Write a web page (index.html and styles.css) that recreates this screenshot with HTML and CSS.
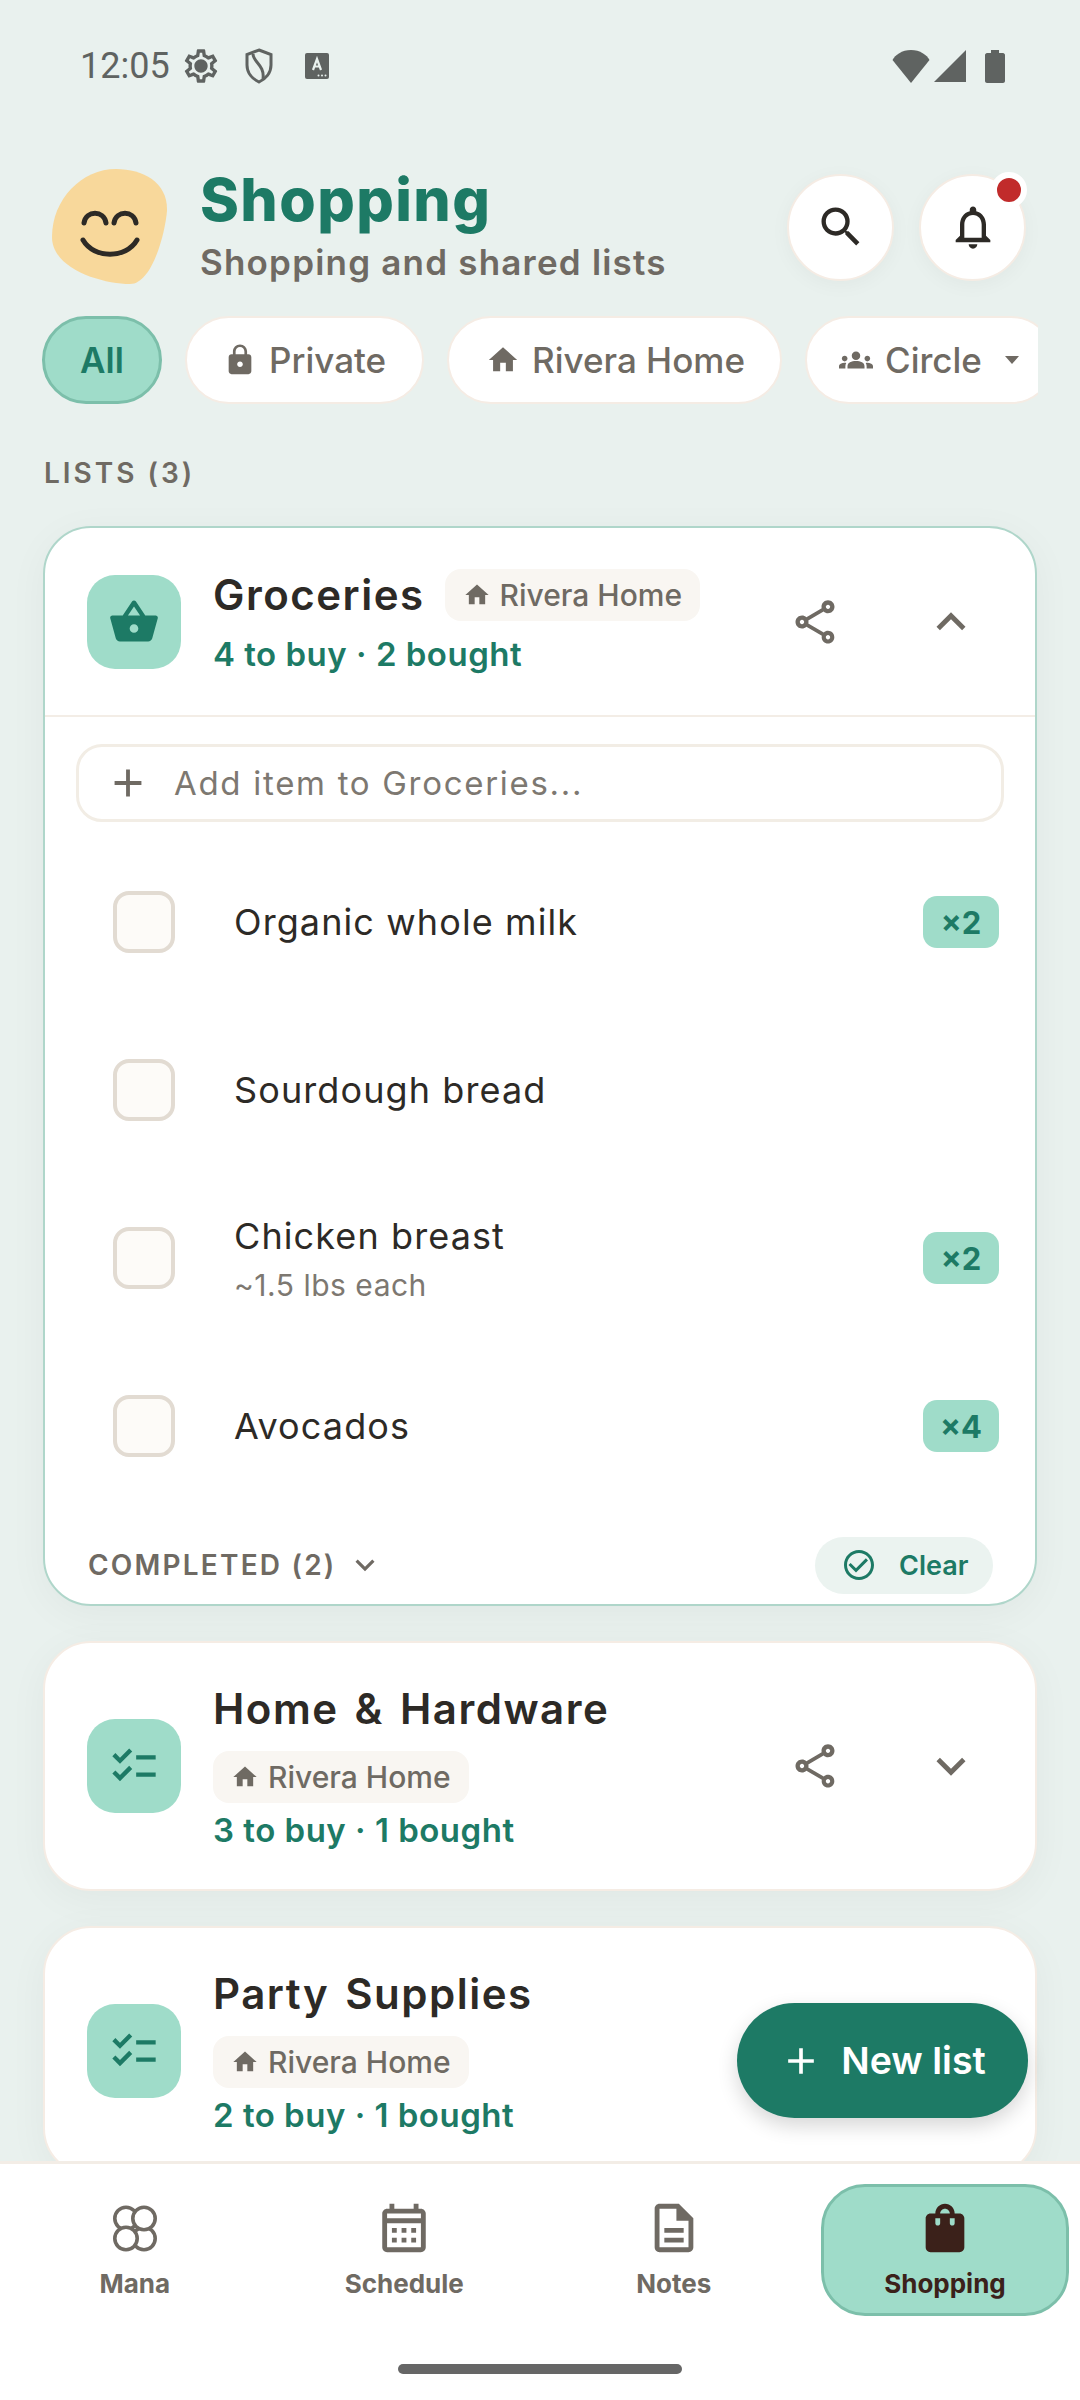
FILE: index.html
```html
<!DOCTYPE html>
<html lang="en">
<head>
    <meta charset="UTF-8">
    <meta name="viewport" content="width=device-width, initial-scale=1.0">
    <title>Shopping</title>
    <link rel="stylesheet" href="styles.css">
</head>
<body>
    <div class="screen">
        <div class="status-bar">
            <span class="clock">12:05</span>
            <svg class="st-gear" viewBox="0 0 24 24"><path d="M19.43 12.98c.04-.32.07-.64.07-.98 0-.34-.03-.66-.07-.98l2.11-1.65c.19-.15.24-.42.12-.64l-2-3.46c-.09-.16-.26-.25-.44-.25-.06 0-.12.01-.17.03l-2.49 1c-.52-.4-1.08-.73-1.69-.98l-.38-2.65C14.46 2.18 14.25 2 14 2h-4c-.25 0-.46.18-.49.42l-.38 2.65c-.61.25-1.17.59-1.69.98l-2.49-1c-.06-.02-.12-.03-.18-.03-.17 0-.34.09-.43.25l-2 3.46c-.13.22-.07.49.12.64l2.11 1.65c-.04.32-.07.65-.07.98 0 .33.03.66.07.98l-2.11 1.65c-.19.15-.24.42-.12.64l2 3.46c.09.16.26.25.44.25.06 0 .12-.01.17-.03l2.49-1c.52.4 1.08.73 1.69.98l.38 2.65c.03.24.24.42.49.42h4c.25 0 .46-.18.49-.42l.38-2.65c.61-.25 1.17-.59 1.69-.98l2.49 1c.06.02.12.03.18.03.17 0 .34-.09.43-.25l2-3.46c.12-.22.07-.49-.12-.64l-2.11-1.65zm-1.98-1.71c.04.31.05.52.05.73 0 .21-.02.43-.05.73l-.14 1.13.89.7 1.08.84-.7 1.21-1.27-.51-1.04-.42-.9.68c-.43.32-.84.56-1.25.73l-1.06.43-.16 1.13-.2 1.35h-1.4l-.19-1.35-.16-1.13-1.06-.43c-.43-.18-.83-.41-1.23-.71l-.91-.7-1.06.43-1.27.51-.7-1.21 1.08-.84.89-.7-.14-1.13c-.03-.31-.05-.54-.05-.74s.02-.43.05-.73l.14-1.13-.89-.7-1.08-.84.7-1.21 1.27.51 1.04.42.9-.68c.43-.32.84-.56 1.25-.73l1.06-.43.16-1.13.2-1.35h1.39l.19 1.35.16 1.13 1.06.43c.43.18.83.41 1.23.71l.91.7 1.06-.43 1.27-.51.7 1.21-1.07.85-.89.7.14 1.13zM12 8c-2.21 0-4 1.79-4 4s1.79 4 4 4 4-1.79 4-4-1.79-4-4-4z"/></svg>
            <svg class="st-shield" viewBox="0 0 30 36"><path d="M15 2 L27 6.5 V17 C27 25 21.5 31 15 34 C8.500 31 3 25 3 17 V6.5 Z" fill="none" stroke="#5f6361" stroke-width="3"/><path d="M9 6 C9 14 21 17 19 31" fill="none" stroke="#5f6361" stroke-width="3"/></svg>
            <svg class="st-a" viewBox="0 0 24 26"><rect width="24" height="26" rx="2"/><path d="M8 17 L12 6 L16 17 M9.500 13.500 H14.500" fill="none" stroke="#e9f1ee" stroke-width="2.200"/><circle cx="13.500" cy="22.500" r="1" fill="#e9f1ee"/><circle cx="17" cy="22.500" r="1" fill="#e9f1ee"/><circle cx="20.500" cy="22.500" r="1" fill="#e9f1ee"/></svg>
            <span class="status-spacer"></span>
            <svg class="st-wifi" viewBox="0 0 38 33"><path d="M19 33 L0.500 10 C3 5 10 0 19 0 C28 0 35 5 37.500 10 Z"/></svg>
            <svg class="st-signal" viewBox="0 0 32 32"><path d="M32 0 V32 H0 Z"/></svg>
            <svg class="st-battery" viewBox="0 0 20 33"><path d="M6 0 H14 V3 H18 C19 3 20 4 20 5 V31 C20 32 19 33 18 33 H2 C1 33 0 32 0 31 V5 C0 4 1 3 2 3 H6 Z"/></svg>
        </div>

        <div class="header">
            <svg class="avatar" viewBox="0 0 116 116">
                <path d="M64 0 C92 0 116 14 115 42 C113 65 100 115 78 115 C50 115 0 100 0 68 C0 30 30 0 64 0 Z" fill="#f8d89b"/>
                <path d="M32 54 C34 41 52 41 54 54 M62 54 C64 41 82 41 84 54 M31 71 C42 90 74 90 85 71" fill="none" stroke="#2d2a26" stroke-width="5" stroke-linecap="round"/>
            </svg>
            <div class="header-text">
                <h1>Shopping</h1>
                <p>Shopping and shared lists</p>
            </div>
            <div class="round-btn">
                <svg viewBox="0 0 24 24"><path d="M15.500 14h-.79l-.28-.27A6.471 6.471 0 0 0 16 9.500 6.500 6.500 0 1 0 9.500 16c1.610 0 3.090-.59 4.230-1.570l.27.28v.79l5 4.990L20.490 19l-4.990-5zm-6 0C7.010 14 5 11.990 5 9.500S7.010 5 9.500 5 14 7.010 14 9.500 11.990 14 9.500 14z"/></svg>
            </div>
            <div class="round-btn">
                <svg viewBox="0 0 24 24"><path d="M12 22c1.100 0 2-.9 2-2h-4c0 1.100.89 2 2 2zm6-6v-5c0-3.070-1.640-5.640-4.500-6.320V4c0-.83-.67-1.500-1.500-1.500s-1.500.67-1.500 1.500v.68C7.630 5.360 6 7.920 6 11v5l-2 2v1h16v-1l-2-2zm-2 1H8v-6c0-2.480 1.510-4.500 4-4.500s4 2.020 4 4.500v6z"/></svg>
                <span class="notif-dot"></span>
            </div>
        </div>

        <div class="chips">
            <div class="chip chip-active">All</div>
            <div class="chip chip-private">
                <svg viewBox="0 0 24 24"><path d="M18 8h-1V6c0-2.760-2.240-5-5-5S7 3.240 7 6v2H6c-1.100 0-2 .9-2 2v10c0 1.100.9 2 2 2h12c1.100 0 2-.9 2-2V10c0-1.100-.9-2-2-2zm-6 9c-1.100 0-2-.9-2-2s.9-2 2-2 2 .9 2 2-.9 2-2 2zm3.100-9H8.900V6c0-1.710 1.390-3.100 3.100-3.100 1.710 0 3.100 1.390 3.100 3.100v2z"/></svg>
                Private
            </div>
            <div class="chip chip-home">
                <svg viewBox="0 0 24 24"><path d="M10 20v-6h4v6h5v-8h3L12 3 2 12h3v8z"/></svg>
                Rivera Home
            </div>
            <div class="chip chip-circle">
                <svg viewBox="0 0 24 24"><path d="M12 12.750c1.630 0 3.070.39 4.240.9 1.080.48 1.760 1.560 1.760 2.730V18H6v-1.610c0-1.180.68-2.260 1.760-2.730 1.170-.52 2.610-.91 4.240-.91zM4 13c1.100 0 2-.9 2-2s-.9-2-2-2-2 .9-2 2 .9 2 2 2zm1.130 1.100c-.37-.06-.74-.1-1.130-.1-.99 0-1.930.21-2.780.58C.48 14.900 0 15.620 0 16.430V18h4.500v-1.610c0-.83.23-1.610.63-2.290zM20 13c1.100 0 2-.9 2-2s-.9-2-2-2-2 .9-2 2 .9 2 2 2zm4 3.430c0-.81-.48-1.530-1.220-1.850-.85-.37-1.790-.58-2.780-.58-.39 0-.76.04-1.130.1.4.68.63 1.460.63 2.290V18H24v-1.570zM12 6c1.660 0 3 1.340 3 3s-1.340 3-3 3-3-1.340-3-3 1.340-3 3-3z"/></svg>
                Circle
                <span class="caret"></span>
            </div>
        </div>

        <div class="main">
            <div class="section-label">LISTS (3)</div>

            <div class="card card-open">
                <div class="card-head">
                    <div class="list-icon">
                        <svg viewBox="0 0 24 24"><path d="M22 9h-4.790l-4.380-6.560c-.19-.28-.51-.42-.83-.42s-.64.14-.83.43L6.790 9H2c-.55 0-1 .45-1 1 0 .09.01.18.04.27l2.540 9.270c.23.84 1 1.460 1.920 1.460h13c.92 0 1.690-.62 1.930-1.460l2.540-9.270L23 10c0-.55-.45-1-1-1zM12 4.800L14.800 9H9.200L12 4.800zM12 17c-1.100 0-2-.9-2-2s.9-2 2-2 2 .9 2 2-.9 2-2 2z"/></svg>
                    </div>
                    <div class="card-info">
                        <div class="title-row">
                            <span class="card-title">Groceries</span>
                            <span class="tag"><svg viewBox="0 0 24 24"><path d="M10 20v-6h4v6h5v-8h3L12 3 2 12h3v8z"/></svg>Rivera Home</span>
                        </div>
                        <div class="card-sub">4 to buy · 2 bought</div>
                    </div>
                    <svg class="share" viewBox="0 0 24 24"><path d="M18 16.080c-.76 0-1.440.3-1.960.77L8.910 12.700c.05-.23.09-.46.09-.7s-.04-.47-.09-.7l7.050-4.110c.54.5 1.250.81 2.040.81 1.660 0 3-1.340 3-3s-1.340-3-3-3-3 1.340-3 3c0 .24.04.47.09.7L8.040 9.810C7.500 9.310 6.790 9 6 9c-1.660 0-3 1.340-3 3s1.340 3 3 3c.79 0 1.500-.31 2.040-.81l7.120 4.160c-.05.21-.08.43-.08.65 0 1.610 1.310 2.920 2.920 2.920s2.920-1.310 2.920-2.920-1.310-2.920-2.920-2.920zM18 4c.55 0 1 .45 1 1s-.45 1-1 1-1-.45-1-1 .45-1 1-1zM6 13c-.55 0-1-.45-1-1s.45-1 1-1 1 .45 1 1-.45 1-1 1zm12 7.020c-.55 0-1-.45-1-1s.45-1 1-1 1 .45 1 1-.45 1-1 1z"/></svg>
                    <svg class="chevron" viewBox="0 0 24 24"><path d="M12 8l-6 6 1.410 1.410L12 10.830l4.590 4.580L18 14z"/></svg>
                </div>

                <div class="add-wrap">
                    <div class="add-item">
                        <svg viewBox="0 0 24 24"><path d="M19 13h-6v6h-2v-6H5v-2h6V5h2v6h6v2z"/></svg>
                        Add item to Groceries...
                    </div>
                </div>

                <div class="items">
                    <div class="item">
                        <span class="check"></span>
                        <div class="item-text"><div class="item-name">Organic whole milk</div></div>
                        <span class="qty">×2</span>
                    </div>
                    <div class="item">
                        <span class="check"></span>
                        <div class="item-text"><div class="item-name">Sourdough bread</div></div>
                    </div>
                    <div class="item">
                        <span class="check"></span>
                        <div class="item-text">
                            <div class="item-name">Chicken breast</div>
                            <div class="item-note">~1.5 lbs each</div>
                        </div>
                        <span class="qty">×2</span>
                    </div>
                    <div class="item">
                        <span class="check"></span>
                        <div class="item-text"><div class="item-name">Avocados</div></div>
                        <span class="qty">×4</span>
                    </div>
                </div>

                <div class="completed">
                    <span class="completed-label">COMPLETED (2)</span>
                    <svg viewBox="0 0 24 24"><path d="M16.590 8.590L12 13.170 7.410 8.590 6 10l6 6 6-6z"/></svg>
                    <span class="clear-btn">
                        <svg viewBox="0 0 24 24"><path d="M16.590 7.580L10 14.170l-3.590-3.580L5 12l5 5 8-8zM12 2C6.480 2 2 6.480 2 12s4.480 10 10 10 10-4.480 10-10S17.520 2 12 2zm0 18c-4.420 0-8-3.580-8-8s3.580-8 8-8 8 3.580 8 8-3.580 8-8 8z"/></svg>
                        Clear
                    </span>
                </div>
            </div>

            <div class="card">
                <div class="card-head card-head-stack">
                    <div class="list-icon">
                        <svg viewBox="0 0 24 24"><path d="M22 7h-9v2h9V7zm0 8h-9v2h9v-2zM5.540 11L2 7.460l1.410-1.410 2.120 2.120 4.240-4.240 1.410 1.410L5.540 11zm0 8L2 15.460l1.410-1.410 2.120 2.120 4.240-4.240 1.410 1.410L5.540 19z"/></svg>
                    </div>
                    <div class="card-info">
                        <div class="card-title">Home &amp; Hardware</div>
                        <span class="tag"><svg viewBox="0 0 24 24"><path d="M10 20v-6h4v6h5v-8h3L12 3 2 12h3v8z"/></svg>Rivera Home</span>
                        <div class="card-sub">3 to buy · 1 bought</div>
                    </div>
                    <svg class="share" viewBox="0 0 24 24"><path d="M18 16.080c-.76 0-1.440.3-1.960.77L8.910 12.700c.05-.23.09-.46.09-.7s-.04-.47-.09-.7l7.050-4.110c.54.5 1.250.81 2.040.81 1.660 0 3-1.340 3-3s-1.340-3-3-3-3 1.340-3 3c0 .24.04.47.09.7L8.040 9.810C7.500 9.310 6.790 9 6 9c-1.660 0-3 1.340-3 3s1.340 3 3 3c.79 0 1.500-.31 2.040-.81l7.120 4.160c-.05.21-.08.43-.08.65 0 1.610 1.310 2.920 2.920 2.920s2.920-1.310 2.920-2.920-1.310-2.920-2.920-2.920zM18 4c.55 0 1 .45 1 1s-.45 1-1 1-1-.45-1-1 .45-1 1-1zM6 13c-.55 0-1-.45-1-1s.45-1 1-1 1 .45 1 1-.45 1-1 1zm12 7.020c-.55 0-1-.45-1-1s.45-1 1-1 1 .45 1 1-.45 1-1 1z"/></svg>
                    <svg class="chevron" viewBox="0 0 24 24"><path d="M16.590 8.590L12 13.170 7.410 8.590 6 10l6 6 6-6z"/></svg>
                </div>
            </div>

            <div class="card">
                <div class="card-head card-head-stack">
                    <div class="list-icon">
                        <svg viewBox="0 0 24 24"><path d="M22 7h-9v2h9V7zm0 8h-9v2h9v-2zM5.540 11L2 7.460l1.410-1.410 2.120 2.120 4.240-4.240 1.410 1.410L5.540 11zm0 8L2 15.460l1.410-1.410 2.120 2.120 4.240-4.240 1.410 1.410L5.540 19z"/></svg>
                    </div>
                    <div class="card-info">
                        <div class="card-title">Party Supplies</div>
                        <span class="tag"><svg viewBox="0 0 24 24"><path d="M10 20v-6h4v6h5v-8h3L12 3 2 12h3v8z"/></svg>Rivera Home</span>
                        <div class="card-sub">2 to buy · 1 bought</div>
                    </div>
                </div>
            </div>

            <div class="fab">
                <svg viewBox="0 0 24 24"><path d="M19 13h-6v6h-2v-6H5v-2h6V5h2v6h6v2z"/></svg>
                New list
            </div>
        </div>

        <div class="nav">
            <div class="nav-item">
                <svg viewBox="0 0 44 47" class="nav-mana"><g fill="#fff" stroke="#6f6a63" stroke-width="3.600"><circle cx="13" cy="13.500" r="11.200"/><circle cx="31" cy="33.500" r="11.200"/><circle cx="31" cy="13.500" r="11.200"/><circle cx="13" cy="33.500" r="11.200"/></g></svg>
                <span>Mana</span>
            </div>
            <div class="nav-item">
                <svg viewBox="0 0 24 24"><path d="M19 4h-1V2h-2v2H8V2H6v2H5c-1.100 0-2 .9-2 2v14c0 1.100.9 2 2 2h14c1.100 0 2-.9 2-2V6c0-1.100-.9-2-2-2zm0 16H5V10h14v10zm0-12H5V6h14v2zM7 12h2v2H7zm4 0h2v2h-2zm4 0h2v2h-2zM7 16h2v2H7zm4 0h2v2h-2zm4 0h2v2h-2z"/></svg>
                <span>Schedule</span>
            </div>
            <div class="nav-item">
                <svg viewBox="0 0 24 24"><path d="M8 16h8v2H8zm0-4h8v2H8zm6-10H6c-1.100 0-2 .9-2 2v16c0 1.100.89 2 1.990 2H18c1.100 0 2-.9 2-2V8l-6-6zm4 18H6V4h7v5h5v11z"/></svg>
                <span>Notes</span>
            </div>
            <div class="nav-item nav-active">
                <svg viewBox="0 0 24 24"><path d="M18 6h-2c0-2.210-1.790-4-4-4S8 3.790 8 6H6c-1.100 0-2 .9-2 2v12c0 1.100.9 2 2 2h12c1.100 0 2-.9 2-2V8c0-1.100-.9-2-2-2zm-8 4c0 .55-.45 1-1 1s-1-.45-1-1V8h2v2zm2-6c1.100 0 2 .9 2 2h-4c0-1.100.9-2 2-2zm4 6c0 .55-.45 1-1 1s-1-.45-1-1V8h2v2z"/></svg>
                <span>Shopping</span>
            </div>
            <div class="home-bar"></div>
        </div>
    </div>
</body>
</html>
```

FILE: styles.css
```css
* {
    box-sizing: border-box;
}
body {
    margin: 0;
    font-family: Inter, sans-serif;
    background-color: #e9f1ee;
}
.screen {
    width: 1080px;
    height: 2400px;
    display: flex;
    flex-direction: column;
    overflow: hidden;
    background-color: #e9f1ee;
}

/* status bar */
.status-bar {
    height: 132px;
    padding: 0 75px 0 80px;
    display: flex;
    align-items: center;
    fill: #5f6361;
    flex: none;
}
.status-spacer {
    flex: 1;
}
.clock {
    font-family: Roboto, sans-serif;
    font-size: 36px;
    color: #5f6361;
    width: 100px;
}
.st-gear { width: 40px; height: 40px; margin-left: 1px; }
.st-shield { width: 30px; height: 36px; margin-left: 23px; }
.st-a { width: 24px; height: 26px; margin-left: 31px; }
.st-wifi { width: 38px; height: 33px; }
.st-signal { width: 32px; height: 32px; margin-left: 4px; }
.st-battery { width: 20px; height: 33px; margin-left: 19px; }

/* header */
.header {
    flex: none;
    height: 132px;
    margin-top: 29px;
    padding: 0 54px 0 52px;
    display: flex;
    align-items: center;
}
.avatar {
    width: 116px;
    height: 116px;
    flex: none;
}
.header-text {
    flex: 1;
    margin: 0 0 6px 32px;
}
.header-text h1 {
    margin: 0 0 9px;
    font-size: 59px;
    line-height: 66px;
    letter-spacing: 1.4px;
    font-weight: 800;
    color: #1d7a65;
}
.header-text p {
    margin: 0;
    font-size: 35px;
    line-height: 40px;
    letter-spacing: 1.2px;
    font-weight: 600;
    color: #6f6a63;
}
.round-btn {
    position: relative;
    width: 107px;
    height: 107px;
    margin-left: 25px;
    border-radius: 50%;
    background-color: #fff;
    border: 2px solid #f5ece4;
    box-shadow: 0 4px 20px rgba(0, 0, 0, 0.04);
    display: flex;
    align-items: center;
    justify-content: center;
    fill: #2d2a26;
}
.round-btn svg {
    width: 52px;
    height: 52px;
}
.notif-dot {
    position: absolute;
    top: -4px;
    right: -3px;
    width: 36px;
    height: 36px;
    border-radius: 50%;
    background-color: #c12b2b;
    border: 6px solid #fff;
}

/* filter chips */
.chips {
    flex: none;
    width: 1038px;
    margin-top: 23px;
    padding-left: 42px;
    display: flex;
    gap: 23px;
    overflow: hidden;
}
.chip {
    flex: none;
    height: 88px;
    display: flex;
    align-items: center;
    gap: 12px;
    border-radius: 44px;
    background-color: #fff;
    border: 2px solid #f5ece4;
    font-size: 35px;
    font-weight: 500;
    color: #6f6a63;
    fill: #6f6a63;
}
.chip svg {
    width: 34px;
    height: 34px;
    flex: none;
}
.chip-active {
    width: 120px;
    justify-content: center;
    background-color: #9fdcc9;
    border: 3px solid #7cbfaa;
    color: #1d7a65;
    font-weight: 600;
}
.chip-private { width: 239px; padding-left: 36px; }
.chip-home { width: 335px; padding-left: 37px; }
.chip-circle { width: 250px; padding-left: 32px; }
.caret {
    width: 0;
    height: 0;
    margin-left: 11px;
    border-left: 7px solid transparent;
    border-right: 7px solid transparent;
    border-top: 8px solid #6f6a63;
}

/* list area */
.main {
    position: relative;
    flex: 1;
    min-height: 0;
    overflow: hidden;
    padding: 0 43px;
}
.section-label {
    margin: 55px 0 0 1px;
    height: 29px;
    line-height: 29px;
    font-size: 28px;
    font-weight: 600;
    letter-spacing: 3px;
    color: #6f6a63;
}
.card {
    margin-top: 35px;
    background-color: #fff;
    border: 2px solid #f5ece4;
    border-radius: 48px;
    box-shadow: 0 8px 40px rgba(0, 0, 0, 0.045);
}
.card-open {
    margin-top: 38px;
    height: 1080px;
    border-color: #afd6ca;
}
.card-head {
    height: 189px;
    padding-left: 42px;
    display: flex;
    align-items: center;
    border-bottom: 2px solid #f3ede6;
}
.card-head-stack {
    height: 246px;
    border-bottom: none;
}
.card-head-stack .card-info {
    display: flex;
    flex-direction: column;
    align-items: flex-start;
}
.card-head-stack .tag {
    margin-top: 16px;
}
.card-head-stack .card-sub {
    margin-top: 7px;
}
.list-icon {
    width: 94px;
    height: 94px;
    flex: none;
    border-radius: 28px;
    background-color: #9fdcc9;
    display: flex;
    align-items: center;
    justify-content: center;
    fill: #1d7a65;
}
.list-icon svg {
    width: 52px;
    height: 52px;
}
.card-info {
    flex: 1;
    margin-left: 32px;
}
.title-row {
    display: flex;
    align-items: center;
    gap: 20px;
}
.card-title {
    font-size: 42px;
    line-height: 52px;
    letter-spacing: 1.5px;
    word-spacing: 4px;
    font-weight: 600;
    color: #2d2a26;
}
.tag {
    display: inline-flex;
    align-items: center;
    gap: 9px;
    height: 52px;
    padding: 0 18px;
    border-radius: 16px;
    background-color: #f9f6f2;
    font-size: 30px;
    font-weight: 500;
    color: #6f6a63;
    fill: #6f6a63;
}
.tag svg {
    width: 28px;
    height: 28px;
}
.card-sub {
    margin-top: 13px;
    font-size: 33px;
    line-height: 40px;
    letter-spacing: 0.5px;
    font-weight: 600;
    color: #1d7a65;
}
.share {
    width: 52px;
    height: 52px;
    margin-right: 81px;
    flex: none;
    fill: #6f6a63;
}
.chevron {
    width: 58px;
    height: 58px;
    margin-right: 55px;
    flex: none;
    fill: #6f6a63;
}

/* add item input */
.add-wrap {
    padding: 27px 31px 0;
}
.add-item {
    height: 78px;
    padding-left: 26px;
    display: flex;
    align-items: center;
    gap: 23px;
    border: 3px solid #f2ede5;
    border-radius: 26px;
    font-size: 33px;
    letter-spacing: 1.7px;
    color: #7d7871;
    fill: #6f6a63;
}
.add-item svg {
    width: 46px;
    height: 46px;
}

/* items */
.items {
    padding-top: 16px;
}
.item {
    height: 168px;
    padding: 0 36px 0 68px;
    display: flex;
    align-items: center;
}
.check {
    width: 62px;
    height: 62px;
    flex: none;
    border-radius: 16px;
    border: 4px solid #e2dbd2;
    background-color: #fdfbf8;
}
.item-text {
    flex: 1;
    margin-left: 59px;
}
.item-name {
    font-size: 36px;
    line-height: 44px;
    letter-spacing: 1.1px;
    color: #2d2a26;
}
.item-note {
    margin-top: 10px;
    font-size: 30px;
    line-height: 34px;
    letter-spacing: 0.5px;
    color: #7d7871;
}
.qty {
    width: 76px;
    height: 52px;
    border-radius: 14px;
    background-color: #9fdcc9;
    display: flex;
    align-items: center;
    justify-content: center;
    font-size: 31px;
    font-weight: 700;
    color: #1d7a65;
}
.completed {
    height: 60px;
    margin-top: 25px;
    padding: 0 42px 0 43px;
    display: flex;
    align-items: center;
    fill: #6f6a63;
}
.completed > svg {
    width: 38px;
    height: 38px;
    margin-left: 10px;
}
.completed-label {
    font-size: 28px;
    font-weight: 600;
    letter-spacing: 2.2px;
    color: #6f6a63;
}
.clear-btn {
    margin-left: auto;
    width: 178px;
    height: 57px;
    padding-left: 26px;
    display: flex;
    align-items: center;
    gap: 22px;
    border-radius: 29px;
    background-color: #ebf3f0;
    font-size: 27px;
    font-weight: 600;
    color: #1d7a65;
    fill: #1d7a65;
}
.clear-btn svg {
    width: 36px;
    height: 36px;
}

/* floating button */
.fab {
    position: absolute;
    right: 52px;
    bottom: 43px;
    width: 291px;
    height: 115px;
    border-radius: 58px;
    background-color: #1d7a65;
    box-shadow: 0 8px 20px rgba(0, 0, 0, 0.16);
    display: flex;
    align-items: center;
    justify-content: center;
    gap: 18px;
    font-size: 37.5px;
    font-weight: 600;
    color: #fff;
    fill: #fff;
}
.fab svg {
    width: 44px;
    height: 44px;
}

/* bottom nav */
.nav {
    position: relative;
    flex: none;
    height: 239px;
    padding-top: 20px;
    display: flex;
    background-color: #fff;
    border-top: 3px solid #f3ede6;
}
.nav-item {
    width: 269.5px;
    height: 132px;
    display: flex;
    flex-direction: column;
    align-items: center;
    padding-top: 15px;
    font-size: 26px;
    line-height: 30px;
    font-weight: 700;
    color: #6f6a63;
    fill: #6f6a63;
}
.nav-item svg {
    width: 58px;
    height: 58px;
    margin-bottom: 12px;
    flex: none;
}
.nav-item .nav-mana {
    width: 44px;
    height: 47px;
    margin: 6px 0 17px;
}
.nav-active {
    width: 248px;
    margin-left: 12.5px;
    padding-top: 12px;
    border-radius: 44px;
    background-color: #9fdcc9;
    border: 3px solid #7cbfaa;
    color: #3b211a;
    fill: #3b211a;
}
.home-bar {
    position: absolute;
    left: 398px;
    bottom: 26px;
    width: 284px;
    height: 10px;
    border-radius: 5px;
    background-color: #666;
}
```
